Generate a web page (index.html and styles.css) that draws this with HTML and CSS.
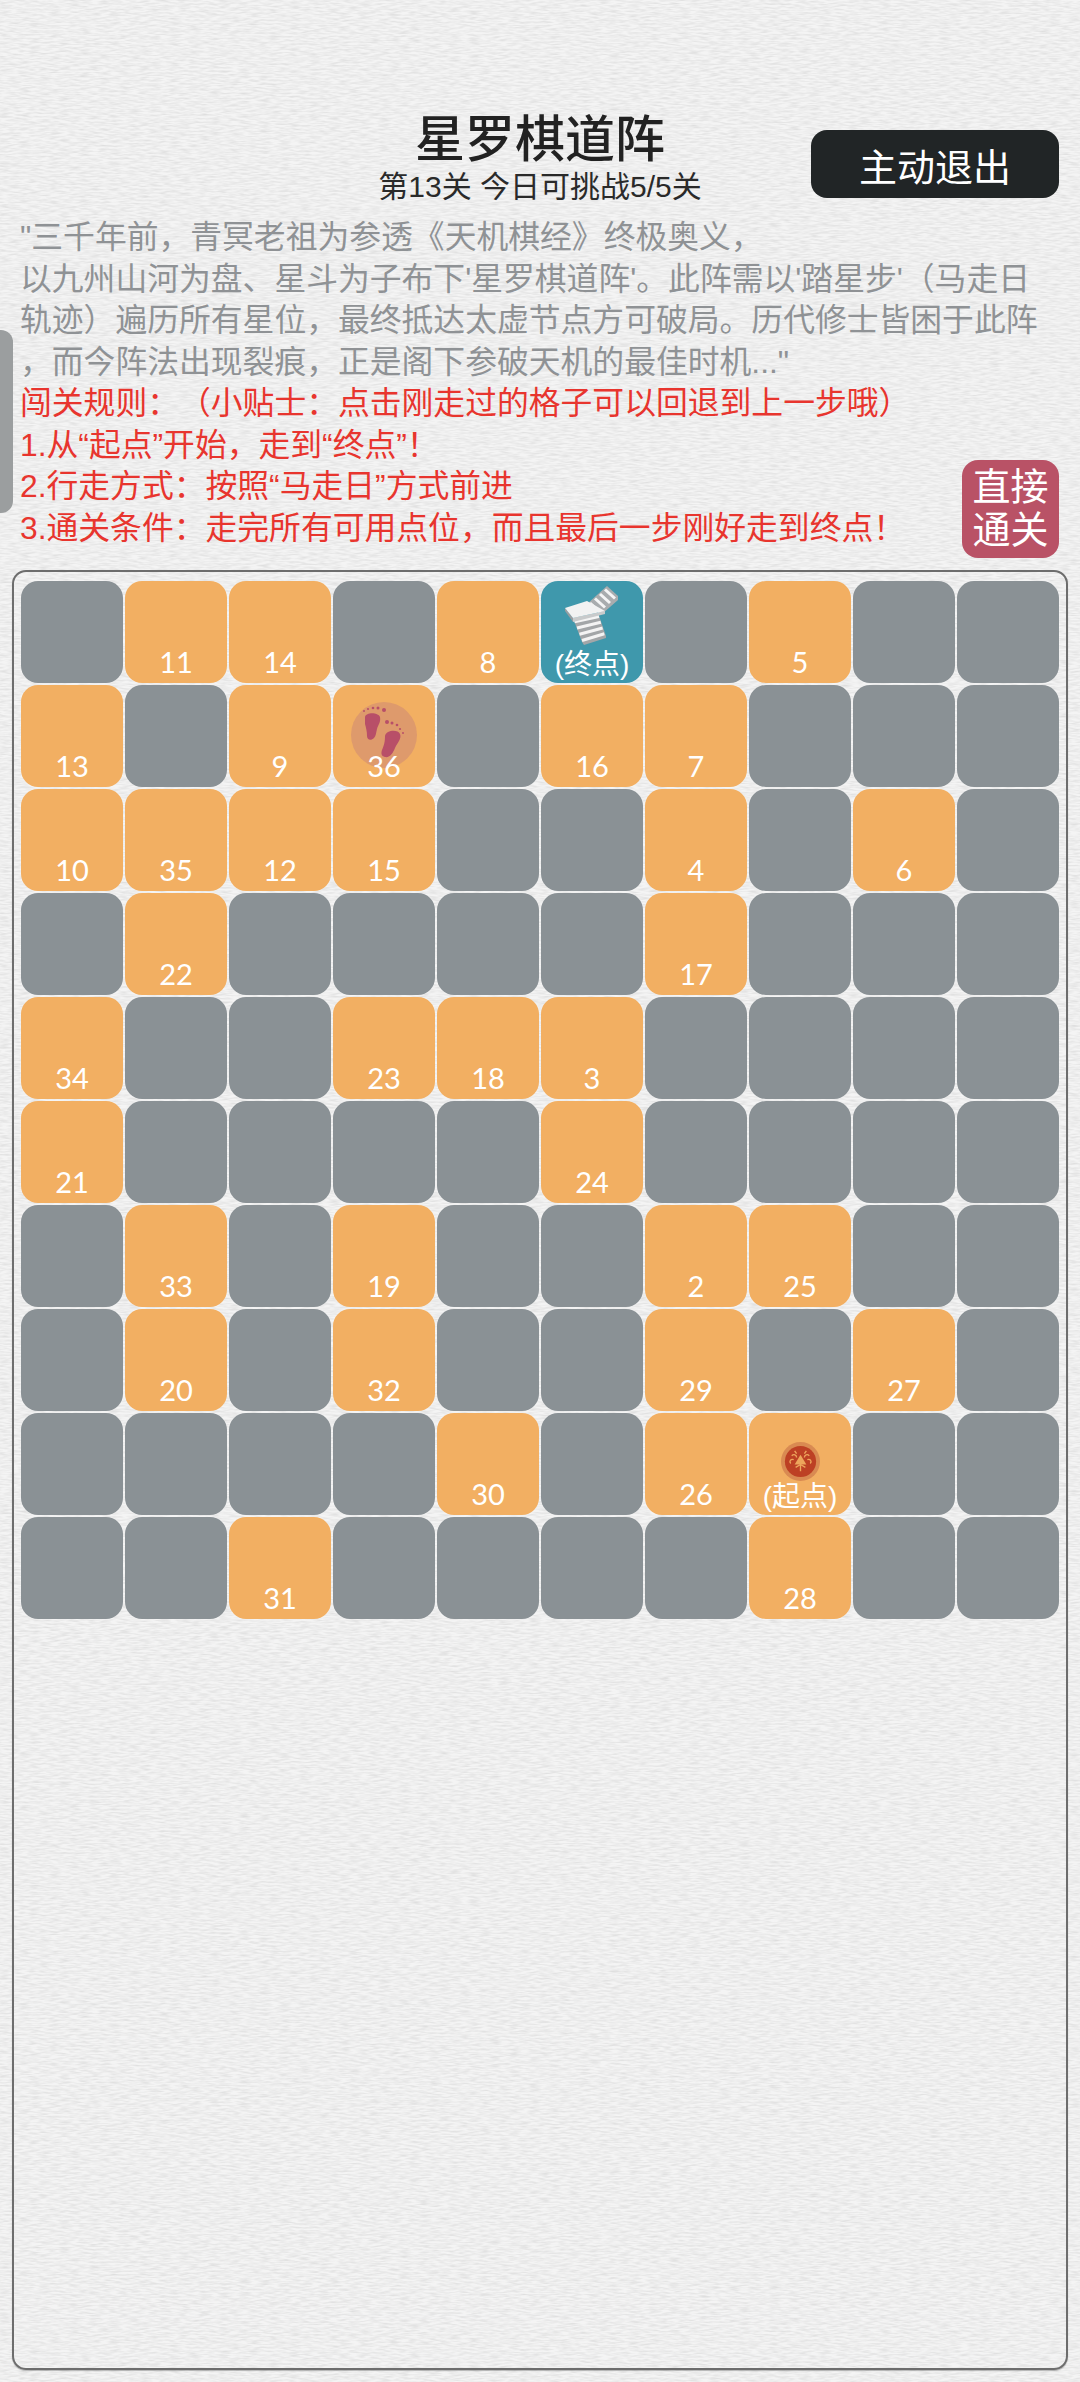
FILE: index.html
```html
<!DOCTYPE html>
<html lang="zh-CN">
<head>
<meta charset="utf-8">
<title>星罗棋道阵</title>
<link rel="stylesheet" href="styles.css">
</head>
<body>
<svg class="texture" width="1080" height="2382" aria-hidden="true">
  <filter id="paper" x="0" y="0" width="100%" height="100%">
    <feTurbulence type="fractalNoise" baseFrequency="0.1 0.55" numOctaves="2" seed="7"/>
    <feColorMatrix type="matrix" values="0 0 0 0 0  0 0 0 0 0  0 0 0 0 0  .16 0 0 0 -.055"/>
  </filter>
  <rect width="1080" height="2382" filter="url(#paper)"/>
</svg>
<div class="side-tab"></div>
<main class="page">
  <header class="header">
    <div class="heading">
      <h1 class="title">星罗棋道阵</h1>
      <p class="subtitle">第13关 今日可挑战5/5关</p>
    </div>
    <button class="exit-btn">主动退出</button>
  </header>
  <section class="story">
    <p>"三千年前，青冥老祖为参透《天机棋经》终极奥义，</p>
    <p>以九州山河为盘、星斗为子布下'星罗棋道阵'。此阵需以'踏星步'（马走日</p>
    <p>轨迹）遍历所有星位，最终抵达太虚节点方可破局。历代修士皆困于此阵</p>
    <p>，而今阵法出现裂痕，正是阁下参破天机的最佳时机..."</p>
  </section>
  <section class="rules-row">
    <div class="rules">
      <p>闯关规则：（小贴士：点击刚走过的格子可以回退到上一步哦）</p>
      <p>1.从“起点”开始，走到“终点”！</p>
      <p>2.行走方式：按照“马走日”方式前进</p>
      <p>3.通关条件：走完所有可用点位，而且最后一步刚好走到终点！</p>
    </div>
    <button class="skip-btn">直接<br>通关</button>
  </section>
  <section class="board">
    <div class="grid">
      <div class="cell off"></div><div class="cell on"><span>11</span></div><div class="cell on"><span>14</span></div><div class="cell off"></div><div class="cell on"><span>8</span></div>
      <div class="cell goal">
        <svg class="stairs" viewBox="33 8 58 62">
          <path d="M57 28 77 10 88 20 88 24 72 38Z" fill="#a9acae"/>
          <path d="M60 27 70 36M65 22.500 75 31.500M70 18 80 27M75 13.500 85 22.500" fill="none" stroke="#f5f5f5" stroke-width="3"/>
          <path d="M43 42 68 37 76 60 76 62 54 69 52 66Z" fill="#a3a6a8"/>
          <path d="M44.500 45.800 69 40.500M47 52 70.800 46.200M49.500 58.300 72.600 52M52 64.500 74.300 57.700" fill="none" stroke="#f4f4f4" stroke-width="3"/>
          <path d="M35 32 43 42 43 46 35 35Z" fill="#9a9da0"/>
          <path d="M43 42 75 35 75 38 43 46Z" fill="#c8cacb"/>
          <path d="M35 32 57 25 75 35 43 42Z" fill="#f2f2f2"/>
        </svg>
        <span>(终点)</span>
      </div>
      <div class="cell off"></div><div class="cell on"><span>5</span></div><div class="cell off"></div><div class="cell off"></div>

      <div class="cell on"><span>13</span></div><div class="cell off"></div><div class="cell on"><span>9</span></div>
      <div class="cell on current">
        <svg class="feet" viewBox="11 16 66 66">
          <circle cx="44" cy="49" r="33" fill="#de9a6c"/>
          <g fill="#b84f68">
            <path d="M25 31C26 26 38 26 40 31 41 36 38 39 37 43 36 47 36 50 34 52 31 55 27 54 27 50 27 45 26 42 25 38Z"/>
            <path d="M45 50C46 44 58 43 60 48 62 53 57 57 55 62 53 67 50 72 45 71 41 70 41 67 42 64 44 59 45 56 45 50Z"/>
            <circle cx="24" cy="25" r="1"/><circle cx="28" cy="23" r="1.100"/><circle cx="33" cy="22" r="1.300"/><circle cx="38" cy="22" r="1.500"/><circle cx="44" cy="24" r="2"/>
            <circle cx="47" cy="36" r="2"/><circle cx="52" cy="37" r="1.500"/><circle cx="57" cy="39" r="1.300"/><circle cx="60" cy="43" r="1.100"/><circle cx="63" cy="47" r="1"/>
          </g>
        </svg>
        <span>36</span>
      </div>
      <div class="cell off"></div><div class="cell on"><span>16</span></div><div class="cell on"><span>7</span></div><div class="cell off"></div><div class="cell off"></div><div class="cell off"></div>

      <div class="cell on"><span>10</span></div><div class="cell on"><span>35</span></div><div class="cell on"><span>12</span></div><div class="cell on"><span>15</span></div><div class="cell off"></div><div class="cell off"></div><div class="cell on"><span>4</span></div><div class="cell off"></div><div class="cell on"><span>6</span></div><div class="cell off"></div>

      <div class="cell off"></div><div class="cell on"><span>22</span></div><div class="cell off"></div><div class="cell off"></div><div class="cell off"></div><div class="cell off"></div><div class="cell on"><span>17</span></div><div class="cell off"></div><div class="cell off"></div><div class="cell off"></div>

      <div class="cell on"><span>34</span></div><div class="cell off"></div><div class="cell off"></div><div class="cell on"><span>23</span></div><div class="cell on"><span>18</span></div><div class="cell on"><span>3</span></div><div class="cell off"></div><div class="cell off"></div><div class="cell off"></div><div class="cell off"></div>

      <div class="cell on"><span>21</span></div><div class="cell off"></div><div class="cell off"></div><div class="cell off"></div><div class="cell off"></div><div class="cell on"><span>24</span></div><div class="cell off"></div><div class="cell off"></div><div class="cell off"></div><div class="cell off"></div>

      <div class="cell off"></div><div class="cell on"><span>33</span></div><div class="cell off"></div><div class="cell on"><span>19</span></div><div class="cell off"></div><div class="cell off"></div><div class="cell on"><span>2</span></div><div class="cell on"><span>25</span></div><div class="cell off"></div><div class="cell off"></div>

      <div class="cell off"></div><div class="cell on"><span>20</span></div><div class="cell off"></div><div class="cell on"><span>32</span></div><div class="cell off"></div><div class="cell off"></div><div class="cell on"><span>29</span></div><div class="cell off"></div><div class="cell on"><span>27</span></div><div class="cell off"></div>

      <div class="cell off"></div><div class="cell off"></div><div class="cell off"></div><div class="cell off"></div><div class="cell on"><span>30</span></div><div class="cell off"></div><div class="cell on"><span>26</span></div>
      <div class="cell on start">
        <svg class="emblem" viewBox="0 0 40 40">
          <circle cx="20" cy="20" r="20" fill="#d98a52"/>
          <circle cx="20" cy="20" r="16" fill="#bd4024"/>
          <g fill="none" stroke="#eda55c" stroke-width="1.400">
            <path d="M20 13l6 10H14z" fill="#eda55c" stroke="none"/>
            <path d="M20 23v7M15 26l5-3 5 3"/>
            <path d="M11 14c2-2 5-1 5 2M29 14c-2-2-5-1-5 2M10 22c-2-2 0-5 3-4M30 22c2-2 0-5-3-4M14 9l2 3M26 9l-2 3"/>
          </g>
        </svg>
        <span>(起点)</span>
      </div>
      <div class="cell off"></div><div class="cell off"></div>

      <div class="cell off"></div><div class="cell off"></div><div class="cell on"><span>31</span></div><div class="cell off"></div><div class="cell off"></div><div class="cell off"></div><div class="cell off"></div><div class="cell on"><span>28</span></div><div class="cell off"></div><div class="cell off"></div>
    </div>
  </section>
</main>
</body>
</html>
```

FILE: styles.css
```css
* { box-sizing: border-box; }
html, body { margin: 0; padding: 0; }
body {
  width: 1080px;
  height: 2382px;
  overflow: hidden;
  position: relative;
  font-family: "Liberation Sans", "Noto Sans CJK SC", sans-serif;
  font-feature-settings: "chws" 0, "halt" 0, "palt" 0;
  text-spacing-trim: space-all;
  background-color: #f4f4f4;
}
p, h1 { margin: 0; }
button { border: 0; padding: 0; font-family: inherit; font-feature-settings: inherit; }

.texture { position: absolute; left: 0; top: 0; }

.side-tab {
  position: absolute;
  left: 0;
  top: 330px;
  width: 13px;
  height: 183px;
  background: #9b9e9f;
  border-radius: 0 12px 12px 0;
}

.page {
  position: relative;
  display: flex;
  flex-direction: column;
  height: 100%;
  padding: 112px 12px 12px;
}

.header {
  display: grid;
  grid-template-columns: 1fr auto 1fr;
  align-items: start;
}
.heading { grid-column: 2; text-align: center; }
.title {
  font-size: 50px;
  line-height: 56px;
  font-weight: 500;
  color: #222;
}
.subtitle {
  font-size: 30px;
  line-height: 38px;
  color: #2a2a2a;
  white-space: nowrap;
}
.exit-btn {
  grid-column: 3;
  justify-self: end;
  width: 248px;
  height: 68px;
  margin: 18px 9px 0 0;
  border-radius: 16px;
  background: #212526;
  color: #fff;
  font-size: 38px;
}

.story, .rules { font-size: 31.800px; line-height: 41.500px; white-space: nowrap; }
.story { margin: 11px 0 0 8px; color: #8f9295; }

.rules-row {
  display: flex;
  justify-content: space-between;
  align-items: flex-end;
  margin: 0 9px 0 8px;
  height: 175px;
}
.rules { color: #e8352e; margin-bottom: 9px; }
.skip-btn {
  width: 97px;
  height: 98px;
  border-radius: 16px;
  background: #b95266;
  color: #fff;
  font-size: 38px;
  line-height: 43px;
}

.board {
  flex: 1;
  margin-top: 12px;
  padding: 9px 7px;
  border: 2px solid #6d6d6d;
  border-radius: 14px;
  box-shadow: 0 1px 1px rgba(0,0,0,.25);
}
.grid {
  display: grid;
  grid-template-columns: repeat(10, 102px);
  grid-auto-rows: 102px;
  gap: 2px;
}
.cell {
  position: relative;
  display: flex;
  flex-direction: column;
  align-items: center;
  justify-content: flex-end;
  border-radius: 17px;
  color: #fff;
  font-size: 29px;
  line-height: 34px;
  padding-bottom: 4px;
  box-shadow: 0 0 2px rgba(255,255,255,.45);
}
.off { background: #8a9195; }
.on { background: #f2af62; }
.goal { background: #3f98ac; }
.cell span { position: relative; font-family: "Lato", sans-serif; }
.goal, .start { padding-bottom: 1px; }
.goal span, .start span { font-family: "Liberation Sans", "Noto Sans CJK SC", sans-serif; font-size: 28px; }

.stairs { position: absolute; left: 22px; top: 3px; width: 58px; height: 62px; }
.feet { position: absolute; left: 18px; top: 17px; width: 66px; height: 66px; }
.emblem { position: absolute; left: 32px; top: 29px; width: 39px; height: 39px; }
```
